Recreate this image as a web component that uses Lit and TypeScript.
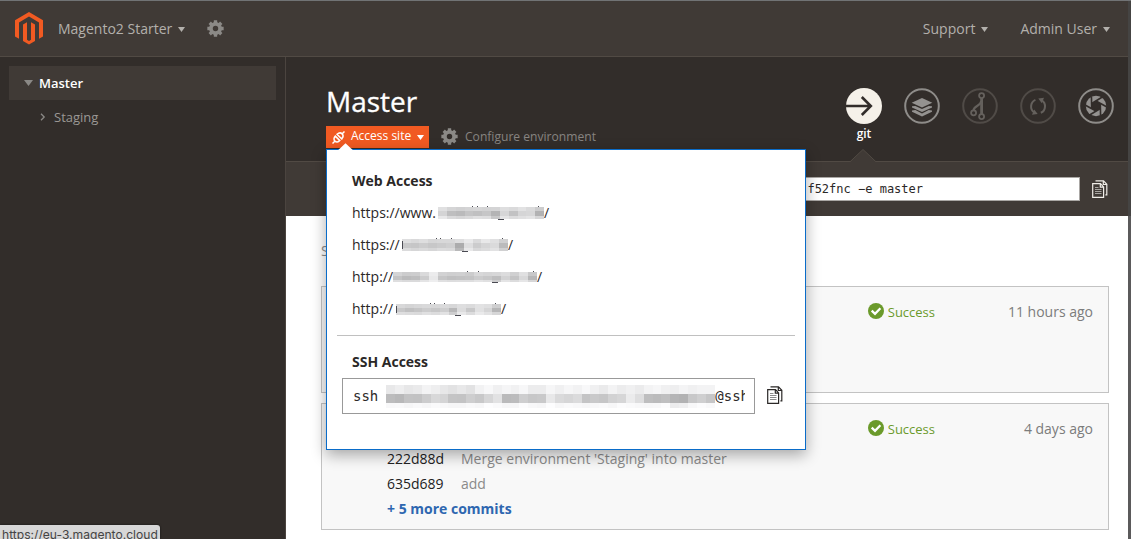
import { LitElement, html, css, svg } from "lit";
import { customElement } from "lit/decorators.js";

const gearPath = (n: number, outer: number, inner: number) => {
  const pts: string[] = [];
  for (let i = 0; i < n; i++) {
    const a = (i * 2 * Math.PI) / n - Math.PI / 2;
    const steps: [number, number][] = [[-0.27, inner], [-0.2, outer], [0.2, outer], [0.27, inner]];
    for (const [d, r] of steps) {
      pts.push(`${(10 + Math.cos(a + d) * r).toFixed(2)} ${(10 + Math.sin(a + d) * r).toFixed(2)}`);
    }
  }
  return `M${pts.join("L")}ZM10 6.8a3.2 3.2 0 1 0 0 6.4a3.2 3.2 0 0 0 0-6.4Z`;
};
const GEAR = gearPath(8, 9.8, 7.6);
const gear = (size: number) => html`<svg width=${size} height=${size} viewBox="0 0 20 20"><path fill="#8b8986" fill-rule="evenodd" d=${GEAR}></path></svg>`;

const caret = (w: number, h: number, fill: string) => html`<svg width=${w} height=${h} viewBox="0 0 10 8" preserveAspectRatio="none"><path d="M0 0H10L5 8Z" fill=${fill}></path></svg>`;

const copyIcon = (stroke: string, lines: string) => html`<svg width="16" height="18" viewBox="0 0 16 18" fill="none">
  <path d="M3.5 .8H11.5L14.8 4.3V14.8H13.4M11.3 .8V4.5H14.8" stroke=${stroke} stroke-width="1.2"></path>
  <path d="M.7 3.7H8.5L11.6 6.9V17.3H.7ZM8.3 3.7V7.1H11.6" stroke=${stroke} stroke-width="1.2"></path>
  <path d="M3 7.5H6.5M3 9.5H9.5M3 11.5H9.5M3 13.5H9.5" stroke=${lines} stroke-width="1"></path>
</svg>`;

const check = html`<svg class="tick" width="16" height="16" viewBox="0 0 16 16"><circle cx="8" cy="8" r="8" fill="#6b9a2b"></circle><path d="M3.7 7.6L7 10.8L12.4 5.2" fill="none" stroke="#fff" stroke-width="2.3"></path></svg>`;

const ring = (color: string, body: unknown) => html`<svg width="36" height="36" viewBox="0 0 36 36" fill="none">
  <circle cx="18" cy="18" r="16.8" stroke=${color} stroke-width="2"></circle>${body}</svg>`;

const gitIcon = html`<svg width="36" height="36" viewBox="0 0 36 36" fill="none"><circle cx="18" cy="18" r="18" fill="#f5f1e9"></circle><path d="M0 18H24.5M15.8 9L24.8 18L15.8 27" stroke="#322d2a" stroke-width="2.6"></path></svg>`;

const layers = ring("#8e8c89", svg`<g fill="#949290"><path d="M18 10L28.3 14.8L18 19.6L7.7 14.8Z"/><path d="M8 18.2L11.3 17.9L18 21L24.7 17.9L28 18.2V19.4L18 24L8 19.4Z"/><path d="M8 22.6L11.3 22.1L18 25.4L24.7 22.1L28 22.6V23.8L18 28.5L8 23.8Z"/></g>`);

const branch = ring("#504b47", svg`<g stroke="#65615d" stroke-width="1.8"><circle cx="19.6" cy="7.6" r="2.5"/><circle cx="19.6" cy="28.6" r="2.5"/><circle cx="11.6" cy="24.8" r="2.5"/><path d="M19.6 10V26.2" stroke-width="2.8"/><path d="M11.6 22.3C11.6 17.5 18.8 18.5 19.2 13" stroke-width="2.2"/></g>`);

const sync = ring("#504b47", svg`<g stroke="#65615d" stroke-width="2"><path d="M15.4 11.8C10.2 14 9.6 21.4 14.2 24.4"/><path d="M20.8 24.8C26 22.7 26.4 15.2 21.8 12.4"/></g><g fill="#65615d"><path d="M18.3 10.6L24 9.8L21.8 15.2Z"/><path d="M17.7 26L12 26.8L14.2 21.4Z"/></g>`);

const blades = [0, 60, 120, 180, 240, 300];
const aperture = ring("#8e8c89", svg`<circle cx="18" cy="18" r="10.2" fill="#949290"/><path d="M18 13L22.3 15.5V20.5L18 23L13.7 20.5V15.5Z" fill="#322d2a"/>${blades.map((a) => svg`<path d="M18 13L28.5 18.8" stroke="#322d2a" stroke-width="1.6" transform=${`rotate(${a} 18 18)`}/>`)}`);

type MaskRow = { h: number; v: number[] };

/* Rows hold grey levels (0-255), one per block; marks are x, y, width, height of small dark strokes. */
@customElement("pixel-mask")
export class PixelMask extends LitElement {
  static properties = { rows: { attribute: false }, marks: { attribute: false }, size: { type: Number } };
  declare rows: MaskRow[];
  declare marks: number[][];
  declare size: number;
  static styles = css`
    :host { display: block; position: relative; }
    .row { display: flex; }
    .cell { flex: none; }
    .mark { position: absolute; background: #4a4a52; }
  `;
  render() {
    return html`${this.rows.map((r) => html`<div class="row">${r.v.map((v) => html`<i class="cell" style=${`width:${this.size}px;height:${r.h}px;background:rgb(${v},${v},${v + 1})`}></i>`)}</div>`)}${(this.marks ?? []).map(([x, y, w, h]) => html`<i class="mark" style=${`left:${x}px;top:${y}px;width:${w}px;height:${h}px`}></i>`)}`;
  }
}

const urls = [
  { text: "https://www.", lead: 2, size: 8.85, marks: [[34, -1, 1, 1], [39, -1, 1, 1], [49, -1, 1, 1], [100, -1, 1, 1], [60, 12, 6, 1]], rows: [
    { h: 4, v: [224, 213, 209, 212, 214, 211, 212, 222, 218, 226, 218, 204] },
    { h: 5, v: [212, 190, 186, 196, 192, 198, 180, 214, 194, 213, 215, 178] },
    { h: 3, v: [232, 218, 214, 218, 224, 222, 200, 228, 220, 224, 228, 214] }] },
  { text: "https://", lead: 2, size: 8.85, marks: [[0, 2, 1, 8], [34, -1, 1, 1], [38, -1, 1, 1], [49, -1, 1, 1], [100, -1, 1, 1], [60, 12, 6, 1]], rows: [
    { h: 4, v: [222, 217, 222, 214, 216, 216, 222, 233, 218, 232, 224, 208] },
    { h: 5, v: [200, 198, 204, 199, 203, 207, 172, 222, 204, 213, 218, 187] },
    { h: 3, v: [219, 214, 218, 214, 220, 218, 184, 232, 216, 220, 226, 208] }] },
  { text: "http://", lead: 0, size: 9, marks: [[74, -1, 1, 1], [85, -1, 1, 1], [140, -1, 1, 1], [99, 10, 6, 1]], rows: [
    { h: 4, v: [212, 204, 205, 218, 236, 210, 207, 208, 204, 216, 213, 215, 220, 208, 224, 200] },
    { h: 4, v: [196, 187, 190, 204, 232, 198, 192, 194, 196, 204, 199, 190, 210, 196, 216, 183] },
    { h: 2, v: [222, 218, 218, 228, 238, 224, 221, 222, 222, 228, 224, 205, 228, 220, 230, 214] }] },
  { text: "http://", lead: 3, size: 8.75, marks: [[0, 2, 1, 7], [34, -1, 1, 1], [38, -1, 1, 1], [48, -1, 1, 1], [99, -1, 1, 1], [59, 11, 6, 1]], rows: [
    { h: 4, v: [216, 212, 215, 217, 215, 218, 215, 222, 219, 226, 223, 206] },
    { h: 4, v: [200, 192, 197, 204, 199, 206, 184, 220, 200, 225, 213, 182] },
    { h: 3, v: [222, 220, 218, 224, 220, 226, 206, 232, 220, 234, 226, 214] }] },
];

const sshRows: MaskRow[] = [
  { h: 9, v: [232, 238, 231, 234, 243, 238, 231, 226, 232, 226, 242, 248, 240, 245, 241, 247, 236, 236, 246, 240, 246, 242, 248, 240, 234, 243, 236, 240, 235, 243, 246, 240, 238, 244, 240, 243, 243] },
  { h: 9, v: [188, 184, 195, 194, 204, 216, 212, 196, 195, 206, 200, 214, 226, 186, 188, 206, 199, 201, 232, 218, 214, 219, 196, 201, 198, 210, 214, 235, 222, 190, 187, 191, 181, 178, 200, 207, 198] },
  { h: 5, v: [248, 249, 246, 249, 246, 250, 248, 246, 246, 249, 247, 253, 250, 246, 246, 252, 248, 246, 253, 247, 250, 248, 246, 248, 250, 247, 252, 250, 248, 247, 248, 252, 236, 239, 248, 252, 249] },
];

@customElement("app-root")
export class AppRoot extends LitElement {
  static styles = css`
    :host { display: block; font-family: "Open Sans", sans-serif; font-size: 14px; color: #2b2827; }
    * { box-sizing: border-box; }
    svg { display: block; flex: none; }
    .page { position: relative; width: 1131px; height: 539px; overflow: hidden; display: flex; background: #fff; }
    .app { width: 1128px; height: 539px; display: flex; flex-direction: column; border-top: 1px solid #717375; }
    .edge { width: 3px; height: 539px; background: linear-gradient(#454443 0 215px, #5b5a5b 215px); border-top: 1px solid #717375; }
    header { height: 56px; flex: none; background: #403a36; border-bottom: 1px solid #514a44; color: #b3b0ac; display: flex; align-items: center; padding: 0 18px 0 15px; line-height: 20px; }
    .logo { margin-right: 15px; }
    .drop { display: flex; align-items: center; gap: 6px; }
    .drop svg { margin-top: 2px; }
    .gear { margin-left: 22px; }
    .right { margin-left: auto; display: flex; gap: 32px; }
    .body { flex: 1; display: flex; min-height: 0; }
    nav { width: 286px; flex: none; background: #322d2a; border-right: 1px solid #4b443f; padding: 9px 9px 0; font-size: 13px; }
    .item { height: 34px; display: flex; align-items: center; background: #403a36; color: #fff; font-weight: 600; padding-left: 15px; gap: 6px; }
    .sub { background: none; color: #9b9895; font-weight: 400; padding-left: 31px; gap: 8px; }
    main { flex: 1; display: flex; flex-direction: column; min-width: 0; }
    .hero { height: 104px; flex: none; background: #322d2a; display: flex; justify-content: space-between; padding: 0 14px 0 40px; }
    h1 { margin: 25px 0 0; font-size: 28px; line-height: 38px; font-weight: 400; color: #fff; -webkit-text-stroke: .3px #fff; }
    .actions { display: flex; align-items: center; margin-top: 6px; font-size: 12px; line-height: 20px; }
    .actions span { margin-top: -2px; }
    .access { height: 22px; width: 103px; background: #f15a22; color: #fff; font-weight: 500; display: flex; align-items: center; padding-left: 6px; gap: 6px; white-space: nowrap; }
    .conf { display: flex; align-items: center; gap: 7px; margin: -1px 0 0 12px; color: #878481; }
    .conf span { margin-top: 0; font-size: 12.1px; }
    .tools { display: flex; gap: 22px; padding-top: 31px; }
    .tool { width: 36px; display: flex; flex-direction: column; align-items: center; color: #fff; font-size: 12px; font-weight: 600; line-height: 16px; gap: 2px; }
    .bar { position: relative; height: 55px; flex: none; background: #403a36; border-top: 1px solid #514a44; display: flex; align-items: center; padding: 0 20px 0 55px; gap: 12px; }
    .notch { position: absolute; left: 564px; top: -13px; }
    .cmd { flex: 1; height: 24px; border: 1px solid #aaa7a4; background: #fff; font: 12px/22px "DejaVu Sans Mono", monospace; padding-right: 156px; text-align: right; white-space: pre; overflow: hidden; }
    .content { flex: 1; padding: 25px 19px 0 35px; background: #fff; }
    .label { color: #8a8a8a; line-height: 20px; height: 45px; }
    .card { background: #f8f8f8; border: 1px solid #c3c3c3; height: 107px; margin-bottom: 10px; }
    .tall { height: 127px; }
    .top { display: flex; justify-content: flex-end; padding: 15px 15px 0 0; line-height: 20px; color: #7c7c7c; }
    .ok { display: flex; gap: 4px; color: #6b9a2b; font-size: 13px; }
    .tick { margin-top: 1px; }
    .when { width: 158px; text-align: right; }
    .commits { padding: 7px 0 0 65px; line-height: 25px; }
    .commit { display: flex; }
    .hash { width: 74px; color: #222; }
    .msg { color: #8a8a8a; }
    .more { color: #2e67b0; font-weight: 700; }
    .popup { position: absolute; left: 326px; top: 149px; width: 480px; height: 301px; background: #fff; border: 1px solid #0a6cc9; box-shadow: 0 5px 14px rgba(0,0,0,.33); padding: 20px 10px 0; }
    .tip { position: absolute; left: 11px; top: -7px; }
    h2 { margin: 0 0 0 15px; font-size: 14px; line-height: 22px; font-weight: 700; }
    .urls { margin: 4px 0 0 15px; }
    .url { display: flex; height: 32px; align-items: center; }
    .url pixel-mask { margin-top: 2px; }
    .rule { height: 1px; background: #c0c0c0; margin: 11px 0 15px; }
    .ssh { display: flex; align-items: center; margin: 5px 0 0 5px; gap: 12px; }
    .ssh > svg { margin-top: -2px; }
    .field { width: 413px; height: 36px; border: 1px solid #999; display: flex; align-items: center; padding-left: 10px; font: 14px "DejaVu Sans Mono", monospace; }
    .blur { margin: 0 0 0 8px; width: 329px; }
    .clip { width: 30px; overflow: hidden; white-space: nowrap; }
    .status { position: absolute; left: 0; bottom: 0; width: 160px; height: 14px; background: #d7d7d7; border-radius: 0 3px 0 0; color: #444; font: 12.1px/19px Inter, sans-serif; padding-left: 2px; white-space: nowrap; box-shadow: 0 0 2px #111; overflow: hidden; }
  `;

  render() {
    return html`<div class="page">
      <div class="app">
        <header>
          <svg class="logo" width="28" height="33" viewBox="0 0 28 33" fill="#f15a22"><path d="M14 0L28 8.2V24.5L24 26.8V10.4L14 4.6L4 10.4V26.8L0 24.5V8.2Z"></path><path d="M8 12.6L12 10.3V27.8L14 29L16 27.8V10.3L20 12.6V29L14 32.5L8 29Z"></path></svg>
          <div class="drop"><span>Magento2 Starter</span>${caret(7, 5, "#b3b0ac")}</div>
          <div class="gear">${gear(17)}</div>
          <div class="right">
            <div class="drop"><span>Support</span>${caret(7, 5, "#b3b0ac")}</div>
            <div class="drop"><span>Admin User</span>${caret(7, 5, "#b3b0ac")}</div>
          </div>
        </header>
        <div class="body">
          <nav>
            <div class="item">${caret(9, 6, "#8b8986")}<span>Master</span></div>
            <div class="item sub"><svg width="6" height="8" viewBox="0 0 6 8"><path d="M1 .8L4.2 4L1 7.2" fill="none" stroke="#8b8986" stroke-width="1.3"></path></svg><span>Staging</span></div>
          </nav>
          <main>
            <div class="hero">
              <div>
                <h1>Master</h1>
                <div class="actions">
                  <div class="access"><svg width="13" height="13" viewBox="0 0 13 13" fill="none" stroke="#fff" stroke-width="1.5"><path d="M.5 12.5L3 10M3.3 5.1L7.8 9.6C6.2 11.3 4.2 11.4 2.9 10.1C1.6 8.8 1.7 6.7 3.3 5.1ZM5.2 3.4C6.9 1.7 8.8 1.6 10.1 2.9C11.4 4.2 11.3 6.1 9.6 7.8M4.5 2.7L10.3 8.5M10 3L12.5 .5"></path></svg><span>Access site</span>${caret(7, 5, "#fff")}</div>
                  <div class="conf">${gear(17)}<span>Configure environment</span></div>
                </div>
              </div>
              <div class="tools">
                <div class="tool">${gitIcon}<span>git</span></div>
                <div class="tool">${layers}</div>
                <div class="tool">${branch}</div>
                <div class="tool">${sync}</div>
                <div class="tool">${aperture}</div>
              </div>
            </div>
            <div class="bar">
              <svg class="notch" width="26" height="14" viewBox="0 0 26 14"><path d="M0 13L13 .5L26 13V14H0Z" fill="#403a36"></path><path d="M0 12.8L13 .5L26 12.8" fill="none" stroke="#514a44"></path></svg>
              <div class="cmd">f52fnc −e master</div>
              ${copyIcon("#f0ede8", "#a8a5a1")}
            </div>
            <div class="content">
              <div class="label">S</div>
              <div class="card"><div class="top"><div class="ok">${check}<span>Success</span></div><div class="when">11 hours ago</div></div></div>
              <div class="card tall"><div class="top"><div class="ok">${check}<span>Success</span></div><div class="when">4 days ago</div></div>
                <div class="commits">
                  <div class="commit"><span class="hash">222d88d</span><span class="msg">Merge environment 'Staging' into master</span></div>
                  <div class="commit"><span class="hash">635d689</span><span class="msg">add</span></div>
                  <div class="more">+ 5 more commits</div>
                </div>
              </div>
            </div>
          </main>
        </div>
      </div>
      <div class="edge"></div>
      <div class="popup">
        <svg class="tip" width="15" height="8" viewBox="0 0 15 8"><path d="M0 7.2L7.5 .3L15 7.2V8H0Z" fill="#fff"></path></svg>
        <h2>Web Access</h2>
        <div class="urls">${urls.map((u) => html`<div class="url"><span>${u.text}</span><pixel-mask style=${`margin-left:${u.lead}px`} .rows=${u.rows} .marks=${u.marks} .size=${u.size}></pixel-mask><span>/</span></div>`)}</div>
        <div class="rule"></div>
        <h2>SSH Access</h2>
        <div class="ssh">
          <div class="field"><span>ssh</span><pixel-mask class="blur" .rows=${sshRows} .size=${8.89}></pixel-mask><span class="clip">@ssh</span></div>
          ${copyIcon("#2b2827", "#8a8a8a")}
        </div>
      </div>
      <div class="status">https://eu-3.magento.cloud</div>
    </div>`;
  }
}
